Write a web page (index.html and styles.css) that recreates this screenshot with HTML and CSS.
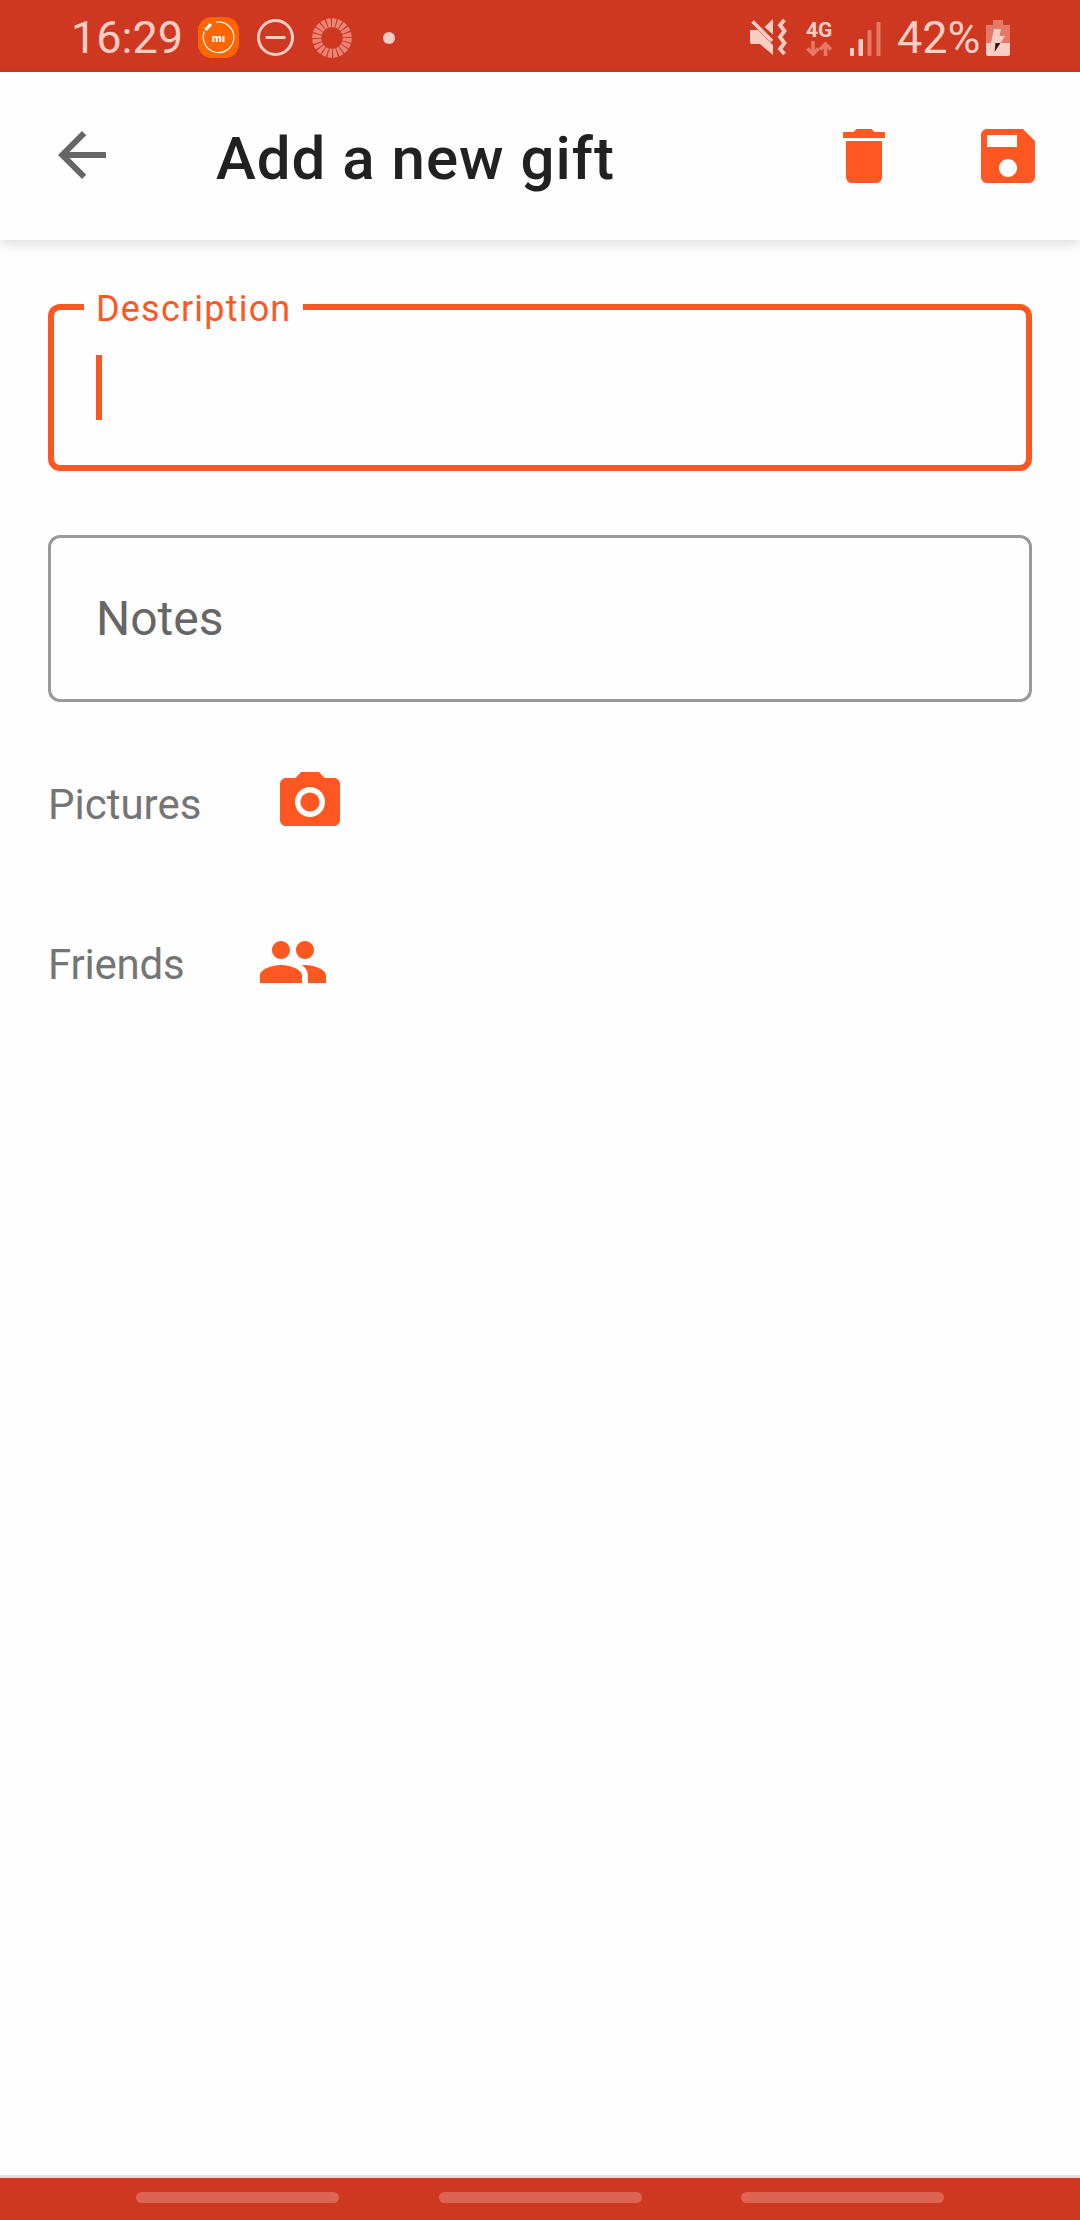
FILE: index.html
```html
<!doctype html>
<html lang="en">
  <head>
    <meta charset="UTF-8" />
    <meta name="viewport" content="width=device-width, initial-scale=1.0" />
    <title>Add a new gift</title>
    <link rel="stylesheet" href="styles.css">
  </head>
  <body>
    <div class="status-bar">
      <div class="status-left">
        <span class="clock">16:29</span>
        <svg class="icon-mi" width="41" height="41" viewBox="0 0 41 41">
          <rect width="41" height="41" rx="14" fill="#ff6500" />
          <path d="M18 5.2A15.3 15.3 0 1 1 6.4 14.5" fill="none" stroke="#fff" stroke-width="1.2" />
          <path d="M7.5 12.8L13 7.2" stroke="#fff" stroke-width="3.2" />
          <text x="20.5" y="24.5" text-anchor="middle" class="mi-text">mı</text>
        </svg>
        <svg class="icon-dnd" width="37" height="37" viewBox="0 0 37 37">
          <circle cx="18.5" cy="18.5" r="17" fill="none" stroke="#facdc5" stroke-width="3" />
          <path d="M8.5 18.5H28.5" stroke="#facdc5" stroke-width="3" />
        </svg>
        <svg class="icon-ring" width="40" height="40" viewBox="0 0 40 40">
          <circle cx="20" cy="20" r="15.3" fill="none" stroke="#ea8576" stroke-width="9" pathLength="200" stroke-dasharray="7.8 2.2" />
        </svg>
        <span class="dot"></span>
      </div>
      <div class="status-right">
        <svg class="icon-mute" width="37" height="37" viewBox="0 0 37 37">
          <path d="M0 11H8L23 26V36L10 25H2Q0 25 0 23Z" fill="#facdc5" />
          <path d="M14.5 8L23 0V15.5Z" fill="#facdc5" />
          <path d="M2.5 2.5L22 22" stroke="#facdc5" stroke-width="3.5" />
          <path d="M34.5 1L30 6L34.5 12L30 18L34.5 24L30 30L34.5 35" fill="none" stroke="#facdc5" stroke-width="3.8" />
        </svg>
        <div class="network">
          <span>4G</span>
          <svg width="26" height="16" viewBox="0 0 26 16" fill="none" stroke="#e4796a" stroke-width="3.6">
            <path d="M7 0V13M1.5 7.5L7 13L12.5 7.5" />
            <path d="M19.5 15V3M14 8.5L19.5 3L25 8.5" />
          </svg>
        </div>
        <svg class="icon-signal" width="31" height="34" viewBox="0 0 31 34">
          <rect x="0" y="26" width="4" height="8" rx="1" fill="#facdc5" />
          <rect x="8.5" y="17" width="4.5" height="17" rx="1" fill="#facdc5" />
          <rect x="17.5" y="8" width="4" height="26" rx="1" fill="#e4796a" />
          <rect x="26.5" y="0" width="4" height="34" rx="1" fill="#e4796a" />
        </svg>
        <span class="battery-level">42%</span>
        <svg class="icon-battery" width="24" height="36" viewBox="0 0 24 36">
          <path d="M7 0H17V5H24V23H0V5H7Z" fill="#e4796a" />
          <path d="M0 23H24V34Q24 36 22 36H2Q0 36 0 34Z" fill="#facdc5" />
          <path d="M8 9H15L13.5 16H19L14.5 23H5Z" fill="#facdc5" />
          <path d="M9.5 23H14.5L8.5 32Z" fill="#35130d" />
        </svg>
      </div>
    </div>

    <header class="app-bar">
      <svg class="back" viewBox="0 0 24 24" fill="#666">
        <path d="M20 11H7.83l5.59-5.59L12 4l-8 8 8 8 1.410-1.410L7.83 13H20v-2z" />
      </svg>
      <h1>Add a new gift</h1>
      <svg class="action" viewBox="0 0 24 24">
        <path d="M6 19c0 1.100.9 2 2 2h8c1.100 0 2-.9 2-2V7H6v12zM19 4h-3.500l-1-1h-5l-1 1H5v2h14V4z" />
      </svg>
      <svg class="action" viewBox="0 0 24 24">
        <path d="M17 3H5c-1.110 0-2 .9-2 2v14c0 1.100.89 2 2 2h14c1.100 0 2-.9 2-2V7l-4-4zM12 19c-1.660 0-3-1.340-3-3s1.340-3 3-3 3 1.340 3 3-1.340 3-3 3zm3-10H5V5h10v4z" />
      </svg>
    </header>

    <main>
      <fieldset class="field focused">
        <legend>Description</legend>
        <span class="cursor"></span>
      </fieldset>

      <div class="field notes">Notes</div>

      <div class="row pictures">
        <span>Pictures</span>
        <svg viewBox="0 0 24 24">
          <circle cx="12" cy="12" r="3.2" />
          <path d="M9 2L7.170 4H4c-1.100 0-2 .9-2 2v12c0 1.100.9 2 2 2h16c1.100 0 2-.9 2-2V6c0-1.100-.9-2-2-2h-3.170L15 2H9zm3 15c-2.760 0-5-2.240-5-5s2.240-5 5-5 5 2.240 5 5-2.240 5-5 5z" />
        </svg>
      </div>

      <div class="row friends">
        <span>Friends</span>
        <svg viewBox="0 0 24 24">
          <path d="M16 11c1.660 0 2.990-1.340 2.990-3S17.660 5 16 5c-1.660 0-3 1.340-3 3s1.340 3 3 3zm-8 0c1.660 0 2.990-1.340 2.990-3S9.660 5 8 5C6.340 5 5 6.340 5 8s1.340 3 3 3zm0 2c-2.330 0-7 1.170-7 3.500V19h14v-2.500c0-2.330-4.670-3.500-7-3.500zm8 0c-.29 0-.62.020-.97.050 1.160.84 1.970 1.970 1.970 3.450V19h6v-2.500c0-2.330-4.670-3.500-7-3.500z" />
        </svg>
      </div>
    </main>

    <nav class="nav-bar">
      <span></span>
      <span></span>
      <span></span>
    </nav>
  </body>
</html>
```
FILE: styles.css
```css
* {
  box-sizing: border-box;
}
body {
  margin: 0;
  height: 2220px;
  display: flex;
  flex-direction: column;
  font-family: Roboto, sans-serif;
  background: #fefefe;
  overflow: hidden;
}
svg {
  display: block;
  flex-shrink: 0;
}

/* status bar */
.status-bar {
  height: 72px;
  padding: 0 70px 0 71px;
  display: flex;
  justify-content: space-between;
  background: #cf3820;
  color: #facdc5;
}
.status-left,
.status-right {
  display: flex;
  align-items: center;
  height: 75px;
}
.clock,
.battery-level {
  font-size: 45px;
  line-height: 75px;
}
.clock {
  width: 127px;
}
.mi-text {
  font: 800 11px Inter, sans-serif;
  fill: #fff;
}
.icon-dnd {
  margin-left: 18px;
}
.icon-ring {
  margin-left: 18px;
}
.dot {
  width: 12px;
  height: 12px;
  margin-left: 31px;
  border-radius: 50%;
  background: #facdc5;
}
.network {
  width: 28px;
  margin-left: 19px;
}
.network span {
  display: block;
  font-size: 21px;
  font-weight: 700;
  line-height: 22px;
}
.icon-signal {
  margin: 2px 0 0 16px;
}
.battery-level {
  margin-left: 16px;
  width: 89px;
}

/* app bar */
.app-bar {
  height: 168px;
  padding: 0 36px 0 46px;
  display: flex;
  align-items: center;
  background: #fefefe;
  box-shadow: 0 4px 12px rgba(0, 0, 0, 0.13);
}
.app-bar svg {
  width: 72px;
  height: 72px;
}
.app-bar .back {
  margin-bottom: 2px;
}
.app-bar h1 {
  flex: 1;
  margin: 4px 0 0 98px;
  font-size: 60px;
  font-weight: 500;
  letter-spacing: 1px;
  color: #212121;
}
.action {
  fill: #ff5722;
}
.action + .action {
  margin-left: 72px;
}

/* form */
main {
  flex: 1;
  padding: 48px 48px 0;
}
.field {
  margin: 0;
  border-radius: 12px;
}
.focused {
  height: 183px;
  padding: 0 42px;
  border: 6px solid #ff5722;
}
.focused legend {
  height: 38px;
  margin-left: -12px;
  padding: 0 12px;
  width: 219px;
  font-size: 36px;
  line-height: 42px;
  letter-spacing: 1.2px;
  color: #ff5722;
}
.cursor {
  display: block;
  width: 6px;
  height: 65px;
  margin-top: 29px;
  background: #ff5722;
}
.notes {
  height: 167px;
  margin-top: 64px;
  padding: 0 45px;
  border: 3px solid #999;
  font-size: 48px;
  line-height: 161px;
  color: #666;
}
.row {
  display: flex;
  align-items: center;
  font-size: 42px;
  color: #757575;
}
.row svg {
  width: 72px;
  height: 72px;
  fill: #ff5722;
}
.row span {
  padding-top: 5px;
}
.pictures {
  margin-top: 64px;
}
.pictures span {
  width: 226px;
}
.friends {
  margin-top: 88px;
}
.friends span {
  width: 209px;
  letter-spacing: -0.2px;
}

/* navigation bar */
.nav-bar {
  height: 45px;
  padding: 14px 0 0 136px;
  display: flex;
  gap: 99.5px;
  border-top: 3px solid #dfe0e0;
  background: #cf3820;
}
.nav-bar span {
  width: 203px;
  height: 11px;
  border-radius: 6px;
  background: #dc6450;
}
```
